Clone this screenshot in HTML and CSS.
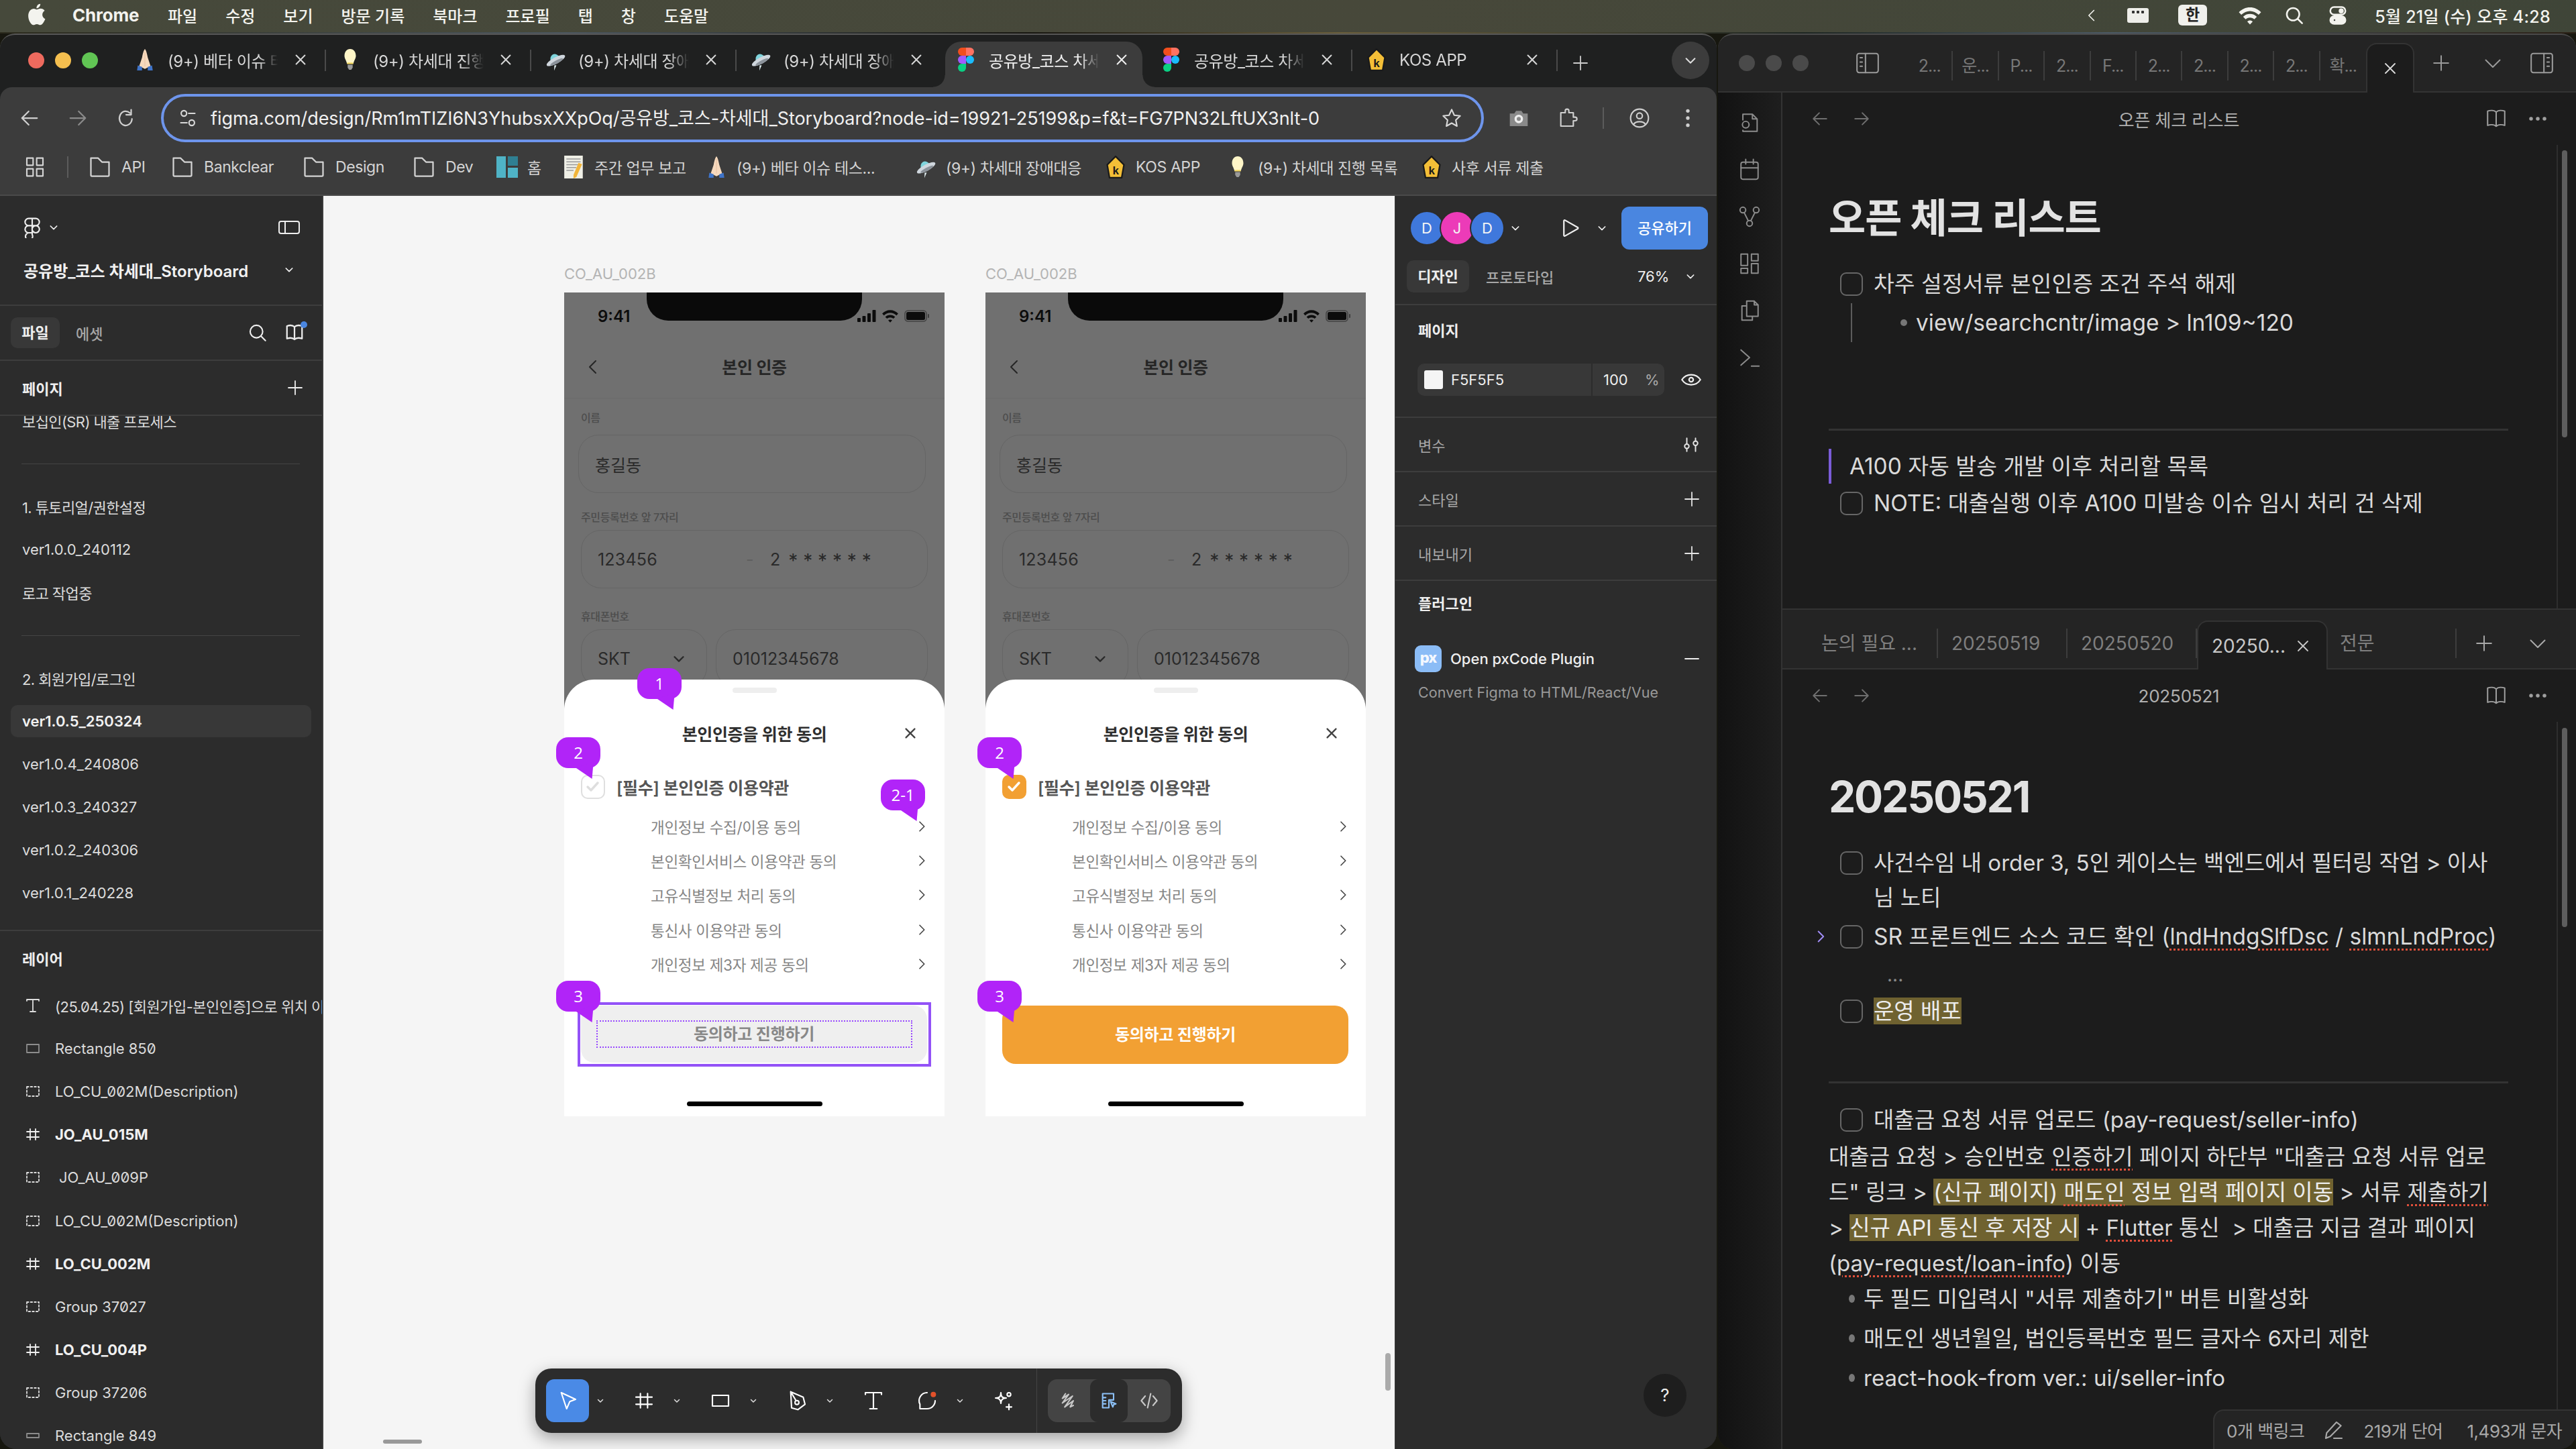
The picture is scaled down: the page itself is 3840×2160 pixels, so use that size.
FILE: index.html
```html
<!DOCTYPE html>
<html lang="ko">
<head>
<meta charset="utf-8">
<title>Figma - Storyboard</title>
<link rel="stylesheet" href="styles.css">
</head>
<body>
<svg class="defs" aria-hidden="true">
  <symbol id="x" viewBox="0 0 24 24"><path d="M5 5L19 19M19 5L5 19"/></symbol>
  <symbol id="back" viewBox="0 0 24 24"><path d="M21 12H3M11 4l-8 8 8 8"/></symbol>
  <symbol id="fwd" viewBox="0 0 24 24"><path d="M3 12h18M13 4l8 8-8 8"/></symbol>
  <symbol id="reload" viewBox="0 0 24 24"><path d="M19 13a7.5 8.5 0 1 1-2.500-7M18 2v6h-6"/></symbol>
  <symbol id="tune" viewBox="0 0 24 24"><circle cx="7" cy="6" r="3.500"/><path d="M13 6h8M3 18h8"/><circle cx="17" cy="18" r="3.500"/></symbol>
  <symbol id="star" viewBox="0 0 24 24"><path d="M12 2.500l2.900 6.300 6.600.8-4.900 4.600 1.300 6.800L12 17.600l-5.900 3.400 1.300-6.800-4.900-4.600 6.600-.8z"/></symbol>
  <symbol id="cam" viewBox="0 0 24 24"><path fill="#8a8a8a" stroke="none" d="M2 7h5l2-3h6l2 3h5v14H2z"/><circle cx="12" cy="13" r="3.500" stroke="#eee" stroke-width="2.500"/></symbol>
  <symbol id="puzzle" viewBox="0 0 24 24"><path d="M5 6h5V4a2 2 0 0 1 4 0v2h5v5h2a2 2 0 0 1 0 4h-2v6H5z"/></symbol>
  <symbol id="profile" viewBox="0 0 24 24"><circle cx="12" cy="12" r="10"/><circle cx="12" cy="9.500" r="3.200"/><path d="M5.500 19c2-4 11-4 13 0"/></symbol>
  <symbol id="kebab" viewBox="0 0 24 24"><g fill="currentColor" stroke="none"><circle cx="12" cy="4" r="2"/><circle cx="12" cy="12" r="2"/><circle cx="12" cy="20" r="2"/></g></symbol>
  <symbol id="dots" viewBox="0 0 24 24"><g fill="currentColor" stroke="none"><circle cx="4" cy="12" r="2.200"/><circle cx="12" cy="12" r="2.200"/><circle cx="20" cy="12" r="2.200"/></g></symbol>
  <symbol id="apps" viewBox="0 0 24 24"><rect x="3" y="2" width="7" height="8"/><rect x="14" y="2" width="7" height="8"/><rect x="3" y="14" width="7" height="8"/><rect x="14" y="14" width="7" height="8"/></symbol>
  <symbol id="folder" viewBox="0 0 24 24"><path d="M3 3h7l4 4h7v13a1 1 0 0 1-1 1H4a1 1 0 0 1-1-1z"/></symbol>
  <symbol id="chevd" viewBox="0 0 24 24"><path d="M5 9l7 7 7-7"/></symbol>
  <symbol id="chevl" viewBox="0 0 24 24"><path d="M16 3l-9 9 9 9"/></symbol>
  <symbol id="chevr" viewBox="0 0 24 24"><path d="M8 3l9 9-9 9"/></symbol>
  <symbol id="plus" viewBox="0 0 24 24"><path d="M12 2v20M2 12h20"/></symbol>
  <symbol id="minus" viewBox="0 0 24 24"><path d="M2 12h20"/></symbol>
  <symbol id="search" viewBox="0 0 24 24"><circle cx="10.500" cy="10.500" r="8"/><path d="M16.500 16.500L22 22"/></symbol>
  <symbol id="book" viewBox="0 0 24 24"><path d="M12 5C10 3 6 3 3 4v15c3-1 7-1 9 1 2-2 6-2 9-1V4c-3-1-7-1-9 1zM12 5v15"/></symbol>
  <symbol id="panel" viewBox="0 0 32 20"><rect x="1" y="1" width="30" height="18" rx="3"/><path d="M10 1v18"/></symbol>
  <symbol id="figmaline" viewBox="0 0 24 24"><path d="M12 2H8a4 4 0 0 0 0 8h4zM12 2h4a4 4 0 0 1 0 8h-4zM12 10H8a4 4 0 0 0 0 8h4zM16 10a4 4 0 1 1-.001 0zM8 18h4v2a4 4 0 1 1-4-2z"/></symbol>
  <symbol id="tt" viewBox="0 0 24 24"><path d="M3 5V3h18v2M12 3v18M8 21h8"/></symbol>
  <symbol id="rect" viewBox="0 0 24 24"><rect x="3" y="6" width="18" height="12"/></symbol>
  <symbol id="rectthin" viewBox="0 0 24 24"><rect x="3" y="9" width="18" height="6"/></symbol>
  <symbol id="dash" viewBox="0 0 24 24"><rect x="3" y="5" width="18" height="14" stroke-dasharray="2.600 3"/></symbol>
  <symbol id="frame" viewBox="0 0 24 24"><path d="M8 4v16M16 4v16M3 8h18M3 16h18"/></symbol>
  <symbol id="eye" viewBox="0 0 24 24"><path d="M1 12c5-8 17-8 22 0-5 8-17 8-22 0z"/><circle cx="12" cy="12" r="2.500"/></symbol>
  <symbol id="vars" viewBox="0 0 24 24"><circle cx="6" cy="14" r="3"/><circle cx="18" cy="10" r="3"/><path d="M6 3v8M6 17v4M18 3v4M18 13v8"/></symbol>
  <symbol id="play" viewBox="0 0 24 24"><path d="M5 3.500v17a1 1 0 0 0 1.500.8l15-8.500a1 1 0 0 0 0-1.600L6.500 2.700A1 1 0 0 0 5 3.500z"/></symbol>
  <symbol id="cursor" viewBox="0 0 24 24"><path d="M5 3l16 7.500-6.500 2.500L11 21z"/></symbol>
  <symbol id="pen" viewBox="0 0 24 24"><path d="M5 2l14 6 2 8-8 6-7-2zM5 2l6 10"/><circle cx="12" cy="14" r="2.200"/></symbol>
  <symbol id="comment" viewBox="0 0 24 24"><path d="M12 3a9 9 0 0 0-8 13v5h8a9 9 0 0 0 9-9"/><circle cx="19" cy="5" r="3" fill="#e2512a" stroke="none"/></symbol>
  <symbol id="actions" viewBox="0 0 24 24"><path d="M9 3c0 4-1 6-6 6 5 0 6 3 6 6 0-3 1-6 6-6-5 0-6-2-6-6z"/><circle cx="18" cy="5" r="2"/><path d="M18 16v6M15 19h6"/></symbol>
  <symbol id="scribble" viewBox="0 0 24 24"><path d="M8 3L4 9l8-5-8 11 13-9L7 20l11-8-4 8 4-2"/></symbol>
  <symbol id="devmode" viewBox="0 0 24 24"><path d="M4 3h14v8h-6v10H4zM4 8h4M4 12h4M4 16h4"/><path d="M14 13l7 3-3 1-1 3z"/></symbol>
  <symbol id="code" viewBox="0 0 24 24"><path d="M7 6l-5 6 5 6M17 6l5 6-5 6M14 3l-4 18"/></symbol>
  <symbol id="pencil" viewBox="0 0 24 24"><path d="M15 3l5 4L8 19l-5 2 1-6zM12 21h9"/></symbol>
  <symbol id="sidel" viewBox="0 0 24 24"><rect x="2" y="3" width="20" height="18" rx="2"/><path d="M10 3v18M5 7h2M5 11h2M5 15h2"/></symbol>
  <symbol id="sider" viewBox="0 0 24 24"><rect x="2" y="3" width="20" height="18" rx="2"/><path d="M14 3v18M17 7h2M17 11h2M17 15h2"/></symbol>
  <symbol id="fsearch" viewBox="0 0 24 24"><path d="M5 9V3h10l5 5v13H5v-1M15 3v5h5"/><circle cx="8" cy="14" r="3.500"/></symbol>
  <symbol id="cal" viewBox="0 0 24 24"><rect x="3" y="4" width="18" height="18" rx="2"/><path d="M3 10h18M8 1v5M16 1v5"/></symbol>
  <symbol id="graph" viewBox="0 0 24 24"><circle cx="5" cy="5" r="3"/><circle cx="19" cy="5" r="3"/><circle cx="12" cy="19" r="3"/><path d="M6.500 8l4 8M17.500 8l-4 8"/></symbol>
  <symbol id="canvasic" viewBox="0 0 24 24"><rect x="3" y="2" width="7" height="12"/><rect x="14" y="2" width="7" height="7"/><rect x="3" y="17" width="7" height="5"/><rect x="14" y="12" width="7" height="10"/></symbol>
  <symbol id="copyic" viewBox="0 0 24 24"><path d="M9 2h8l4 4v12H9zM17 2v4h4M9 7H4v15h11v-4"/></symbol>
  <symbol id="term" viewBox="0 0 24 24"><path d="M3 4l9 8-9 8M14 21h8"/></symbol>
  <symbol id="apple" viewBox="0 0 24 28"><path fill="currentColor" stroke="none" d="M17 0c.3 2.500-2 6-5 6-.4-3 2-6 5-6zM12 7.500c1.500 0 3-1.200 5.500-1.200 2 0 4 1 5.200 2.900-4.500 2.800-3.700 9 .8 10.800-1.300 3.400-4 8-6.500 8-1.700 0-2.500-1.200-4.600-1.200s-3 1.200-4.600 1.200C4.500 28 1 21.500 1 16c0-6 3.800-9.500 7.300-9.500 1.500 0 2.800 1 3.700 1z"/></symbol>
  <symbol id="wifi" viewBox="0 0 24 24"><g fill="currentColor" stroke="none"><path d="M12 4c4.500 0 8 1.800 11 4.800l-2.400 2.500C18 9 15.300 7.600 12 7.600S6 9 3.400 11.300L1 8.800C4 5.800 7.500 4 12 4z"/><path d="M12 10.500c2.800 0 5 1 6.800 2.800l-2.500 2.500c-1.100-1-2.500-1.700-4.300-1.700s-3.200.7-4.300 1.700l-2.500-2.500c1.800-1.800 4-2.800 6.800-2.800z"/><path d="M12 17c1.100 0 2 .4 2.700 1.100L12 21l-2.700-2.900c.7-.7 1.600-1.100 2.700-1.100z"/></g></symbol>
  <symbol id="cc" viewBox="0 0 24 24"><rect x="3" y="2" width="18" height="9" rx="4.500"/><rect x="3" y="13" width="18" height="9" rx="4.500" fill="currentColor"/><circle cx="16" cy="6.500" r="2" fill="currentColor"/><circle cx="8" cy="17.500" r="2" fill="#444"/></symbol>
  <symbol id="signal" viewBox="0 0 28 18"><g fill="currentColor" stroke="none"><rect x="0" y="12" width="5" height="6" rx="1"/><rect x="7.500" y="9" width="5" height="9" rx="1"/><rect x="15" y="5" width="5" height="13" rx="1"/><rect x="22.500" y="0" width="5" height="18" rx="1"/></g></symbol>
  <symbol id="batt" viewBox="0 0 38 18"><rect x="1" y="1" width="32" height="16" rx="4.500" fill="none" stroke="currentColor" stroke-opacity=".45" stroke-width="1.500"/><rect x="3" y="3" width="28" height="12" rx="2.500" fill="currentColor" stroke="none"/><rect x="35" y="6" width="2" height="6" rx="1" fill="currentColor" fill-opacity=".5" stroke="none"/></symbol>
  <symbol id="pray" viewBox="0 0 24 32"><g stroke="none"><path fill="#f6d9bd" d="M12 1c-2 2-3 7-4 12l-4 12 8 4 8-4-4-12c-1-5-2-10-4-12z"/><path fill="#e8c3a3" d="M11.500 5h1v20h-1z"/><path fill="#3f74c9" d="M2 24l6 2v5H1zM22 24l-6 2v5h7z"/></g></symbol>
  <symbol id="bulb" viewBox="0 0 24 32"><g stroke="none"><path fill="#fff6c8" d="M12 1c5 0 8 4.500 8 9.500 0 4-3 7-3.500 11h-9C7 17.500 4 14.500 4 10.500 4 5.500 7 1 12 1z"/><path fill="#f4d860" d="M8 20h8l.5 2h-9z"/><path fill="#9a9a9a" d="M8.500 23h7v4l-2 3h-3l-2-3z"/></g></symbol>
  <symbol id="ufo" viewBox="0 0 24 24"><g stroke="none" transform="rotate(-28 12 12)"><path fill="#7fd4dc" d="M6.500 12a5.500 6.500 0 0 1 11 0z"/><ellipse cx="12" cy="13" rx="11.500" ry="3.600" fill="#cfd6dd"/><ellipse cx="12" cy="14.800" rx="8" ry="1.800" fill="#8b929a"/><path fill="#e6f4f6" d="M8 17l-3 5 5-4z"/></g></symbol>
  <symbol id="figmac" viewBox="0 0 24 36"><g stroke="none"><path fill="#f24e1e" d="M12 0H6a6 6 0 0 0 0 12h6z"/><path fill="#ff7262" d="M12 0h6a6 6 0 0 1 0 12h-6z"/><path fill="#a259ff" d="M12 12H6a6 6 0 0 0 0 12h6z"/><circle cx="18" cy="18" r="6" fill="#1abcfe"/><path fill="#0acf83" d="M6 24h6v6a6 6 0 1 1-6-6z"/></g></symbol>
  <symbol id="kos" viewBox="0 0 28 30"><path fill="#f4bf37" stroke="#1a1a1a" stroke-width="2" d="M14 1l11 11-3 17H6L3 12z"/><text x="14" y="25" font-size="15" font-family="Liberation Sans" font-weight="700" text-anchor="middle" fill="#1a1a1a" stroke="none">k</text></symbol>
  <symbol id="tiles" viewBox="0 0 32 32"><g stroke="none"><rect width="14" height="32" fill="#4fb3c6"/><rect x="17" width="15" height="14" fill="#2f7f92"/><rect x="17" y="17" width="15" height="15" fill="#4fb3c6"/></g></symbol>
  <symbol id="memo" viewBox="0 0 28 32"><g stroke="none"><rect width="26" height="32" fill="#efefe6"/><path fill="#9a9a9a" d="M3 4h20v1.500H3zM3 8h20v1.500H3zM3 12h20v1.500H3zM3 16h14v1.500H3zM3 20h10v1.500H3z"/><path fill="#f2b53a" d="M20 10l5 2-8 18-4 2 0-5z"/></g></symbol>
</svg>

<header class="menubar">
  <svg class="ic s-apple"><use href="#apple"/></svg>
  <b class="m-app">Chrome</b>
  <span class="m-item">파일</span><span class="m-item">수정</span><span class="m-item">보기</span><span class="m-item">방문 기록</span><span class="m-item">북마크</span><span class="m-item">프로필</span><span class="m-item">탭</span><span class="m-item">창</span><span class="m-item">도움말</span>
  <div class="m-right">
    <svg class="ic s-mchev"><use href="#chevl"/></svg>
    <span class="m-box"></span>
    <span class="m-han">한</span>
    <svg class="ic s-mwifi"><use href="#wifi"/></svg>
    <svg class="ic s-msearch"><use href="#search"/></svg>
    <svg class="ic s-mcc"><use href="#cc"/></svg>
    <span class="m-date">5월 21일 (수) 오후 4:28</span>
  </div>
</header>
<div class="strip"></div>

<main class="desktop">
  <section class="chrome">
    <div class="tabstrip">
      <div class="lights"><i class="d-r"></i><i class="d-y"></i><i class="d-g"></i></div>
      <div class="tab"><svg class="fav"><use href="#pray"/></svg><span class="tab-t">(9+) 베타 이슈 테스트</span><svg class="ic tab-x"><use href="#x"/></svg></div><i class="tsep"></i>
      <div class="tab"><svg class="fav"><use href="#bulb"/></svg><span class="tab-t">(9+) 차세대 진행 목록</span><svg class="ic tab-x"><use href="#x"/></svg></div><i class="tsep"></i>
      <div class="tab"><svg class="fav"><use href="#ufo"/></svg><span class="tab-t">(9+) 차세대 장애대응</span><svg class="ic tab-x"><use href="#x"/></svg></div><i class="tsep"></i>
      <div class="tab"><svg class="fav"><use href="#ufo"/></svg><span class="tab-t">(9+) 차세대 장애대응</span><svg class="ic tab-x"><use href="#x"/></svg></div><i class="tsep tsep-off"></i>
      <div class="tab tab-on"><svg class="fav fav-f"><use href="#figmac"/></svg><span class="tab-t">공유방_코스 차세대_S</span><svg class="ic tab-x"><use href="#x"/></svg></div><i class="tsep tsep-off"></i>
      <div class="tab"><svg class="fav fav-f"><use href="#figmac"/></svg><span class="tab-t">공유방_코스 차세대_S</span><svg class="ic tab-x"><use href="#x"/></svg></div><i class="tsep"></i>
      <div class="tab"><svg class="fav"><use href="#kos"/></svg><span class="tab-t">KOS APP</span><svg class="ic tab-x"><use href="#x"/></svg></div><i class="tsep"></i>
      <svg class="ic tab-plus"><use href="#plus"/></svg>
      <div class="tab-menu"><svg class="ic s-16"><use href="#chevd"/></svg></div>
    </div>
    <div class="toolbar">
      <div class="navrow">
        <span class="slot"><svg class="ic s-30"><use href="#back"/></svg></span>
        <span class="slot slot-dim"><svg class="ic s-30"><use href="#fwd"/></svg></span>
        <span class="slot"><svg class="ic s-30"><use href="#reload"/></svg></span>
        <div class="addr">
          <svg class="ic s-28"><use href="#tune"/></svg>
          <span class="url">figma.com/design/Rm1mTIZI6N3YhubsxXXpOq/공유방_코스-차세대_Storyboard?node-id=19921-25199&amp;p=f&amp;t=FG7PN32LftUX3nlt-0</span>
          <svg class="ic s-32"><use href="#star"/></svg>
        </div>
        <span class="slot slot-l"><svg class="ic s-32"><use href="#cam"/></svg></span>
        <span class="slot"><svg class="ic s-32"><use href="#puzzle"/></svg></span>
        <i class="bsep"></i>
        <span class="slot"><svg class="ic s-32"><use href="#profile"/></svg></span>
        <span class="slot"><svg class="ic s-32"><use href="#kebab"/></svg></span>
      </div>
      <div class="bookmarks">
        <svg class="ic s-32"><use href="#apps"/></svg>
        <i class="bm-sep"></i>
        <span class="bm"><svg class="ic s-36"><use href="#folder"/></svg>API</span>
        <span class="bm"><svg class="ic s-36"><use href="#folder"/></svg>Bankclear</span>
        <span class="bm"><svg class="ic s-36"><use href="#folder"/></svg>Design</span>
        <span class="bm"><svg class="ic s-36"><use href="#folder"/></svg>Dev</span>
        <span class="bm"><svg class="fav"><use href="#tiles"/></svg>홈</span>
        <span class="bm"><svg class="fav"><use href="#memo"/></svg>주간 업무 보고</span>
        <span class="bm"><svg class="fav"><use href="#pray"/></svg>(9+) 베타 이슈 테스...</span>
        <span class="bm"><svg class="fav"><use href="#ufo"/></svg>(9+) 차세대 장애대응</span>
        <span class="bm"><svg class="fav"><use href="#kos"/></svg>KOS APP</span>
        <span class="bm"><svg class="fav"><use href="#bulb"/></svg>(9+) 차세대 진행 목록</span>
        <span class="bm"><svg class="fav"><use href="#kos"/></svg>사후 서류 제출</span>
      </div>
    </div>

    <div class="figma">
      <aside class="fl">
        <div class="fl-head">
          <div class="fl-logo"><svg class="ic s-32"><use href="#figmaline"/></svg><svg class="ic s-14"><use href="#chevd"/></svg><svg class="ic s-panel"><use href="#panel"/></svg></div>
          <div class="fl-title"><span>공유방_코스 차세대_Storyboard</span><svg class="ic s-14"><use href="#chevd"/></svg></div>
        </div>
        <div class="fl-tabs">
          <span class="pill">파일</span><span class="pill-off">에셋</span>
          <svg class="ic s-28 push"><use href="#search"/></svg>
          <span class="bookdot"><svg class="ic s-30"><use href="#book"/></svg><i></i></span>
        </div>
        <div class="fl-sec"><b>페이지</b><svg class="ic s-24"><use href="#plus"/></svg></div>
        <div class="fl-list">
          <div class="pg pg-first pg-k">보십인(SR) 내출 프로세스</div>
          <div class="pg"><i class="pg-line"></i></div>
          <div class="pg pg-k">1. 튜토리얼/권한설정</div>
          <div class="pg">ver1.0.0_240112</div>
          <div class="pg pg-k">로고 작업중</div>
          <div class="pg"><i class="pg-line"></i></div>
          <div class="pg pg-k">2. 회원가입/로그인</div>
          <div class="pg pg-on"><span>ver1.0.5_250324</span></div>
          <div class="pg">ver1.0.4_240806</div>
          <div class="pg">ver1.0.3_240327</div>
          <div class="pg">ver1.0.2_240306</div>
          <div class="pg">ver1.0.1_240228</div>
          <div class="pg pg-k">회원가입 이전 버전</div>
        </div>
        <div class="fl-layers">
          <div class="fl-sec2"><b>레이어</b></div>
          <div class="ly"><svg class="ic s-24"><use href="#tt"/></svg><span class="ly-k">(25.04.25) [회원가입-본인인증]으로 위치 이동</span></div>
          <div class="ly"><svg class="ic s-24 dim"><use href="#rect"/></svg><span>Rectangle 850</span></div>
          <div class="ly"><svg class="ic s-24"><use href="#dash"/></svg><span>LO_CU_002M(Description)</span></div>
          <div class="ly ly-b"><svg class="ic s-24"><use href="#frame"/></svg><span>JO_AU_015M</span></div>
          <div class="ly"><svg class="ic s-24"><use href="#dash"/></svg><span class="ly-in">JO_AU_009P</span></div>
          <div class="ly"><svg class="ic s-24"><use href="#dash"/></svg><span>LO_CU_002M(Description)</span></div>
          <div class="ly ly-b"><svg class="ic s-24"><use href="#frame"/></svg><span>LO_CU_002M</span></div>
          <div class="ly"><svg class="ic s-24"><use href="#dash"/></svg><span>Group 37027</span></div>
          <div class="ly ly-b"><svg class="ic s-24"><use href="#frame"/></svg><span>LO_CU_004P</span></div>
          <div class="ly"><svg class="ic s-24"><use href="#dash"/></svg><span>Group 37206</span></div>
          <div class="ly"><svg class="ic s-24 dim"><use href="#rectthin"/></svg><span>Rectangle 849</span></div>
        </div>
      </aside>

      <div class="canvas">
        <div class="flabel flabel-a">CO_AU_002B</div>
        <div class="flabel flabel-b">CO_AU_002B</div>

        <article class="phone phone-a">
          <div class="ph-top">
            <div class="notch"></div>
            <div class="ph-status"><b>9:41</b><span class="ph-sys"><svg class="s-signal"><use href="#signal"/></svg><svg class="s-wifi"><use href="#wifi"/></svg><svg class="s-batt"><use href="#batt"/></svg></span></div>
            <div class="ph-nav"><svg class="ic s-24 ph-back"><use href="#chevl"/></svg><b>본인 인증</b></div>
            <div class="ph-body">
              <div class="lbl lbl-1">이름</div>
              <div class="inp inp-1">홍길동</div>
              <div class="lbl lbl-2">주민등록번호 앞 7자리</div>
              <div class="inp inp-2"><span class="rn">123456</span><span class="rn-d">-</span><span>2</span><span class="rn-s">* * * * * *</span></div>
              <div class="lbl lbl-3">휴대폰번호</div>
              <div class="inp-row"><div class="inp inp-s">SKT<svg class="ic s-22"><use href="#chevd"/></svg></div><div class="inp inp-p">01012345678</div></div>
            </div>
          </div>
          <div class="sheet">
            <div class="grab"></div>
            <div class="sh-title"><span></span><b>본인인증을 위한 동의</b><svg class="ic s-22 sh-x"><use href="#x"/></svg></div>
            <div class="sh-check"><span class="cbx"><svg class="ic s-26"><path d="M5 13l5 5L20 7"/></svg></span><b>[필수] 본인인증 이용약관</b></div>
            <div class="sh-li"><span>개인정보 수집/이용 동의</span><svg class="ic s-18"><use href="#chevr"/></svg></div>
            <div class="sh-li"><span>본인확인서비스 이용약관 동의</span><svg class="ic s-18"><use href="#chevr"/></svg></div>
            <div class="sh-li"><span>고유식별정보 처리 동의</span><svg class="ic s-18"><use href="#chevr"/></svg></div>
            <div class="sh-li"><span>통신사 이용약관 동의</span><svg class="ic s-18"><use href="#chevr"/></svg></div>
            <div class="sh-li"><span>개인정보 제3자 제공 동의</span><svg class="ic s-18"><use href="#chevr"/></svg></div>
            <div class="sh-btn"><i class="sel-outer"></i><i class="sel-dots"></i><b>동의하고 진행하기</b></div>
            <div class="homebar"></div>
          </div>
          <div class="badge b-1">1</div>
          <div class="badge b-2">2</div>
          <div class="badge b-21">2-1</div>
          <div class="badge b-3">3</div>
        </article>

        <article class="phone phone-b">
          <div class="ph-top">
            <div class="notch"></div>
            <div class="ph-status"><b>9:41</b><span class="ph-sys"><svg class="s-signal"><use href="#signal"/></svg><svg class="s-wifi"><use href="#wifi"/></svg><svg class="s-batt"><use href="#batt"/></svg></span></div>
            <div class="ph-nav"><svg class="ic s-24 ph-back"><use href="#chevl"/></svg><b>본인 인증</b></div>
            <div class="ph-body">
              <div class="lbl lbl-1">이름</div>
              <div class="inp inp-1">홍길동</div>
              <div class="lbl lbl-2">주민등록번호 앞 7자리</div>
              <div class="inp inp-2"><span class="rn">123456</span><span class="rn-d">-</span><span>2</span><span class="rn-s">* * * * * *</span></div>
              <div class="lbl lbl-3">휴대폰번호</div>
              <div class="inp-row"><div class="inp inp-s">SKT<svg class="ic s-22"><use href="#chevd"/></svg></div><div class="inp inp-p">01012345678</div></div>
            </div>
          </div>
          <div class="sheet">
            <div class="grab"></div>
            <div class="sh-title"><span></span><b>본인인증을 위한 동의</b><svg class="ic s-22 sh-x"><use href="#x"/></svg></div>
            <div class="sh-check"><span class="cbx cbx-on"><svg class="ic s-26"><path d="M5 13l5 5L20 7"/></svg></span><b>[필수] 본인인증 이용약관</b></div>
            <div class="sh-li"><span>개인정보 수집/이용 동의</span><svg class="ic s-18"><use href="#chevr"/></svg></div>
            <div class="sh-li"><span>본인확인서비스 이용약관 동의</span><svg class="ic s-18"><use href="#chevr"/></svg></div>
            <div class="sh-li"><span>고유식별정보 처리 동의</span><svg class="ic s-18"><use href="#chevr"/></svg></div>
            <div class="sh-li"><span>통신사 이용약관 동의</span><svg class="ic s-18"><use href="#chevr"/></svg></div>
            <div class="sh-li"><span>개인정보 제3자 제공 동의</span><svg class="ic s-18"><use href="#chevr"/></svg></div>
            <div class="sh-btn sh-btn-on"><b>동의하고 진행하기</b></div>
            <div class="homebar"></div>
          </div>
          <div class="badge b-2">2</div>
          <div class="badge b-3">3</div>
        </article>

        <i class="cv-vbar"></i>
        <i class="cv-hbar"></i>

        <div class="tools">
          <span class="tool tool-on"><svg class="ic s-32"><use href="#cursor"/></svg></span><span class="tchev"><svg class="ic s-12"><use href="#chevd"/></svg></span>
          <span class="tool tm"><svg class="ic s-32"><use href="#frame"/></svg></span><span class="tchev"><svg class="ic s-12"><use href="#chevd"/></svg></span>
          <span class="tool tm"><svg class="ic s-32"><use href="#rect"/></svg></span><span class="tchev"><svg class="ic s-12"><use href="#chevd"/></svg></span>
          <span class="tool tm"><svg class="ic s-32"><use href="#pen"/></svg></span><span class="tchev"><svg class="ic s-12"><use href="#chevd"/></svg></span>
          <span class="tool tm"><svg class="ic s-32"><use href="#tt"/></svg></span>
          <span class="tool tm"><svg class="ic s-32"><use href="#comment"/></svg></span><span class="tchev"><svg class="ic s-12"><use href="#chevd"/></svg></span>
          <span class="tool tm"><svg class="ic s-32"><use href="#actions"/></svg></span>
          <i class="tdiv"></i>
          <div class="tgroup">
            <span class="tg"><svg class="ic s-28"><use href="#scribble"/></svg></span>
            <span class="tg tg-on"><svg class="ic s-28"><use href="#devmode"/></svg></span>
            <span class="tg"><svg class="ic s-28"><use href="#code"/></svg></span>
          </div>
        </div>
      </div>

      <aside class="fr">
        <div class="fr-head">
          <div class="fr-top">
            <span class="av av-b">D</span><span class="av av-p">J</span><span class="av av-b">D</span>
            <svg class="ic s-14 fr-c1"><use href="#chevd"/></svg>
            <svg class="ic s-30 fr-play"><use href="#play"/></svg>
            <svg class="ic s-14 fr-c2"><use href="#chevd"/></svg>
            <span class="share">공유하기</span>
          </div>
          <div class="fr-tabs">
            <span class="pill pill-d">디자인</span><span class="pill-off pill-p">프로토타입</span>
            <span class="zoomv">76%</span><svg class="ic s-14"><use href="#chevd"/></svg>
          </div>
        </div>
        <div class="fr-page">
          <b>페이지</b>
          <div class="colorrow">
            <div class="colorf"><i class="sw"></i><span class="hex">F5F5F5</span><i class="cdiv"></i><span class="pct">100</span><span class="pc">%</span></div>
            <svg class="ic s-30"><use href="#eye"/></svg>
          </div>
        </div>
        <div class="fr-row"><span>변수</span><svg class="ic s-26"><use href="#vars"/></svg></div>
        <div class="fr-row"><span>스타일</span><svg class="ic s-24"><use href="#plus"/></svg></div>
        <div class="fr-row"><span>내보내기</span><svg class="ic s-24"><use href="#plus"/></svg></div>
        <div class="fr-plug">
          <b>플러그인</b>
          <div class="plug-row"><span class="pxi">px</span><span class="pxn">Open pxCode Plugin</span><svg class="ic s-24"><use href="#minus"/></svg></div>
          <div class="plug-d">Convert Figma to HTML/React/Vue</div>
        </div>
        <span class="help">?</span>
      </aside>
    </div>
  </section>

  <section class="obs">
    <div class="ob-bar">
      <div class="lights lights-g"><i></i><i></i><i></i></div>
      <svg class="ic s-38 ob-tl"><use href="#sidel"/></svg>
      <div class="ob-cells"><span>2...</span><span>운...</span><span>P...</span><span>2...</span><span>F...</span><span>2...</span><span>2...</span><span>2...</span><span>2...</span><span>확...</span></div>
      <div class="ob-act"><svg class="ic s-24"><use href="#x"/></svg></div>
      <svg class="ic s-26 ob-plus"><use href="#plus"/></svg>
      <svg class="ic s-20 ob-ch"><use href="#chevd"/></svg>
      <svg class="ic s-38 ob-tr"><use href="#sider"/></svg>
    </div>
    <div class="ob-main">
      <nav class="rail">
        <span><svg class="ic s-34"><use href="#fsearch"/></svg></span>
        <span><svg class="ic s-34"><use href="#cal"/></svg></span>
        <span><svg class="ic s-34"><use href="#graph"/></svg></span>
        <span><svg class="ic s-34"><use href="#canvasic"/></svg></span>
        <span><svg class="ic s-34"><use href="#copyic"/></svg></span>
        <span><svg class="ic s-34"><use href="#term"/></svg></span>
      </nav>
      <div class="ob-col">
        <section class="pane pane-top">
          <div class="pnav"><svg class="ic s-26 pn-a"><use href="#back"/></svg><svg class="ic s-26 pn-a"><use href="#fwd"/></svg><span class="pn-t">오픈 체크 리스트</span><svg class="ic s-34"><use href="#book"/></svg><svg class="ic s-30 pn-d"><use href="#dots"/></svg></div>
          <div class="pbody">
            <div class="doc doc-top">
              <h1 class="h-a">오픈 체크 리스트</h1>
              <div class="todo mt-30"><i class="cb"></i><span>차주 설정서류 본인인증 조건 주석 해제</span></div>
              <div class="nest"><i class="bl"></i><span>view/searchcntr/image &gt; ln109~120</span></div>
              <div class="rule rule-a"></div>
              <blockquote class="quote">A100 자동 발송 개발 이후 처리할 목록</blockquote>
              <div class="todo"><i class="cb"></i><span>NOTE: 대출실행 이후 A100 미발송 이슈 임시 처리 건 삭제</span></div>
            </div>
            <div class="sb"><i class="th th-a"></i></div>
          </div>
        </section>
        <div class="ptabs">
          <span class="pt pt-first">논의 필요 ...</span>
          <span class="pt pt-sep">20250519</span>
          <span class="pt">20250520</span>
          <span class="pt-on"><span>20250...</span><svg class="ic s-24"><use href="#x"/></svg></span>
          <span class="pt-last">전문</span>
          <i class="pt-div"></i>
          <svg class="ic s-26 pt-plus"><use href="#plus"/></svg>
          <svg class="ic s-20 pt-ch"><use href="#chevd"/></svg>
        </div>
        <section class="pane pane-bot">
          <div class="pnav"><svg class="ic s-26 pn-a"><use href="#back"/></svg><svg class="ic s-26 pn-a"><use href="#fwd"/></svg><span class="pn-t">20250521</span><svg class="ic s-34"><use href="#book"/></svg><svg class="ic s-30 pn-d"><use href="#dots"/></svg></div>
          <div class="pbody">
            <div class="doc doc-bot">
              <h1 class="h-b">20250521</h1>
              <div class="todo mt-30"><i class="cb"></i><span>사건수임 내 order 3, 5인 케이스는 백엔드에서 필터링 작업 &gt; 이사<br>님 노티</span></div>
              <div class="todo has-fold"><svg class="ic s-20 fold"><use href="#chevr"/></svg><i class="cb"></i><span>SR 프론트엔드 소스 코드 확인 (<u class="sp">lndHndgSlfDsc</u> / <u class="sp">slmnLndProc</u>)</span></div>
              <div class="more">...</div>
              <div class="todo"><i class="cb"></i><span><mark>운영 배포</mark></span></div>
              <div class="rule rule-b"></div>
              <div class="todo mt-28"><i class="cb"></i><span>대출금 요청 서류 업로드 (pay-request/seller-info)</span></div>
              <p class="para">대출금 요청 &gt; 승인번호 <u class="sp">인증하기</u> 페이지 하단부 "대출금 요청 서류 업로<br>드" 링크 &gt; <mark>(신규 페이지) <u class="sp">매도인</u> 정보 입력 페이지 이동</mark> &gt; 서류 <u class="sp">제출하기</u><br>&gt; <mark>신규 API 통신 후 저장 시</mark> + <u class="sp">Flutter</u> 통신 &nbsp;&gt; 대출금 지급 결과 페이지<br>(<u class="sp">pay-request/loan-info</u>) 이동</p>
              <ul class="ul">
                <li><i class="bl2"></i>두 필드 미입력시 "서류 제출하기" 버튼 비활성화</li>
                <li><i class="bl2"></i>매도인 생년월일, 법인등록번호 필드 글자수 6자리 제한</li>
                <li><i class="bl2"></i>react-hook-from ver.: ui/seller-info</li>
              </ul>
            </div>
            <div class="sb sb-b"><i class="th th-b"></i></div>
          </div>
          <div class="statusbar"><span>0개 백링크</span><svg class="ic s-32"><use href="#pencil"/></svg><span>219개 단어</span><span>1,493개 문자</span></div>
        </section>
      </div>
    </div>
  </section>
</main>
</body>
</html>
```

FILE: styles.css
```css
* { box-sizing: border-box; }
html, body { margin: 0; padding: 0; }
body {
  width: 3840px; height: 2160px; overflow: hidden;
  background: #17170f;
  font-family: Inter, "Noto Sans CJK KR", sans-serif;
  color: #ddd;
}
i { display: block; font-style: normal; }
.defs { position: absolute; width: 0; height: 0; }
.ic { display: block; flex: none; fill: none; stroke: currentColor; stroke-width: 1.8; stroke-linecap: round; stroke-linejoin: round; }
.fav { display: block; flex: none; width: 32px; height: 34px; }
.s-12 { width: 12px; height: 12px; stroke-width: 3; }
.s-14 { width: 16px; height: 16px; stroke-width: 2.6; }
.s-16 { width: 22px; height: 22px; stroke-width: 2.2; }
.s-18 { width: 18px; height: 18px; stroke-width: 2.2; }
.s-20 { width: 20px; height: 20px; }
.s-22 { width: 22px; height: 22px; stroke-width: 2.6; }
.s-24 { width: 24px; height: 24px; }
.s-26 { width: 26px; height: 26px; }
.s-28 { width: 28px; height: 28px; }
.s-30 { width: 30px; height: 30px; }
.s-32 { width: 32px; height: 32px; stroke-width: 1.6; }
.s-34 { width: 34px; height: 34px; stroke-width: 1.4; }
.s-36 { width: 36px; height: 36px; stroke-width: 1.5; }
.s-38 { width: 38px; height: 38px; stroke-width: 1.3; }
.s-panel { width: 32px; height: 20px; stroke-width: 2; margin-left: auto; margin-right: 33px; }
.dim { opacity: .55; }
.push { margin-left: auto; }

/* menu bar */
.menubar {
  height: 48px; display: flex; align-items: center;
  background: linear-gradient(90deg, #46493b 0%, #47483a 55%, #3f4538 100%);
  padding: 0 0 3px 41px; color: #f3f3ee;
}
.s-apple { width: 27px; height: 33px; margin-right: 40px; margin-top: -2px; }
.m-app { font-size: 26px; font-weight: 700; width: 142px; letter-spacing: -.2px; }
.m-item { font-size: 24px; margin-right: 42px; font-weight: 500; white-space: nowrap; }
.m-right { margin-left: auto; display: flex; align-items: center; padding-right: 38px; }
.s-mchev { width: 20px; height: 24px; stroke-width: 2; margin-right: 43px; }
.m-box { width: 32px; height: 22px; border-radius: 3px; margin-right: 44px;
  background:
    radial-gradient(circle at 9px 6px, #333 2px, transparent 2.5px),
    radial-gradient(circle at 16px 6px, #333 2px, transparent 2.5px),
    radial-gradient(circle at 23px 6px, #333 2px, transparent 2.5px),
    #eeeeea; }
.m-han { width: 43px; height: 31px; background: #f0f0ec; border-radius: 6px; color: #222; font-size: 23px; font-weight: 600; text-align: center; line-height: 31px; margin-right: 46px; }
.s-mwifi { width: 36px; height: 36px; margin-right: 34px; }
.s-msearch { width: 28px; height: 28px; stroke-width: 2.2; margin-right: 36px; }
.s-mcc { width: 30px; height: 34px; stroke-width: 2; margin-right: 40px; }
.m-date { font-size: 25px; font-weight: 500; white-space: nowrap; letter-spacing: .3px; }
.strip { height: 2px; background: linear-gradient(90deg, #2b2a1c, #4c5760 22%, #171610 40%, #6b5f3c 52%, #1e2622 70%, #4c5a66 82%, #2b2015); }

.desktop { display: flex; height: 2110px; justify-content: space-between; }

/* chrome */
.chrome {
  width: 2559px; height: 2110px; background: #1f2020; border-top: 2px solid #565656;
  border-radius: 22px 22px 24px 24px; overflow: hidden; display: flex; flex-direction: column;
}
.tabstrip { height: 78px; padding-top: 10px; display: flex; align-items: flex-start; flex: none; }
.lights { width: 180px; height: 56px; padding-left: 42px; display: flex; align-items: center; gap: 16px; flex: none; }
.lights i { width: 24px; height: 24px; border-radius: 50%; }
.d-r { background: #ee6a5e; } .d-y { background: #f5bf4f; } .d-g { background: #61c554; }
.lights-g { width: auto; padding-left: 31px; height: auto; }
.lights-g i { background: #4a4a4a; }
.tab { width: 304px; height: 68px; padding: 0 0 14px 20px; display: flex; align-items: center; flex: none; color: #d7d7d7; position: relative; }
.tab-t { width: 165px; margin-left: 18px; font-size: 24px; white-space: nowrap; overflow: hidden; flex: none; letter-spacing: -.4px;
  -webkit-mask-image: linear-gradient(90deg, #000 82%, transparent 100%); mask-image: linear-gradient(90deg, #000 82%, transparent 100%); }
.tab-x { width: 22px; height: 22px; margin-left: 22px; stroke-width: 2.2; }
.tsep { width: 2px; height: 32px; margin-top: 12px; background: #4a4a4a; flex: none; }
.tsep-off { background: transparent; }
.tab-on { background: #3c3c3c; border-radius: 24px 24px 0 0; width: 294px; margin: 0 5px 0 5px; padding-left: 15px; color: #f0f0f0; }
.tab-on::before, .tab-on::after { content: ""; position: absolute; bottom: 0; width: 18px; height: 18px; }
.tab-on::before { left: -18px; background: radial-gradient(circle at 0 0, transparent 17px, #3c3c3c 18px); }
.tab-on::after { right: -18px; background: radial-gradient(circle at 100% 0, transparent 17px, #3c3c3c 18px); }
.fav-f { width: 24px; height: 36px; margin: 0 4px; }
.tab-plus { width: 24px; height: 24px; margin: 20px 0 0 22px; color: #ccc; }
.tab-menu { width: 56px; height: 56px; border-radius: 28px; background: #3c3c3c; margin-left: auto; margin-right: 11px; display: flex; align-items: center; justify-content: center; color: #ddd; }

.toolbar { background: #3c3c3c; height: 162px; border-radius: 18px 18px 0 0; flex: none; border-bottom: 2px solid #4a4a4a; }
.navrow { height: 82px; padding: 10px 0 0 8px; display: flex; align-items: flex-start; }
.slot { width: 72px; height: 72px; display: flex; align-items: center; justify-content: center; color: #cfcfcf; flex: none; }
.slot-dim { color: #8a8a8a; }
.slot-l { margin-left: 16px; }
.addr { margin-left: 16px; width: 1972px; height: 72px; border: 4px solid #6e95ec; border-radius: 36px; display: flex; align-items: center; padding: 0 28px 0 22px; color: #d8d8d8; flex: none; }
.url { margin: -3px 0 0 20px; font-size: 27px; white-space: nowrap; letter-spacing: -.05px; color: #f0f0f0; flex: 1; }
.bsep { width: 2px; height: 32px; background: #5c5c5c; margin: 20px 17px 0 17px; flex: none; }
.bookmarks { height: 74px; display: grid; grid-template-columns: 64px 33px 123px 196px 164px 124px 100px 212px 312px 283px 182px 289px auto; align-items: center; padding-left: 36px; color: #d4d4d4; font-size: 23px; }
.bm { display: flex; align-items: center; gap: 14px; white-space: nowrap; letter-spacing: -.4px; }
.bm .s-36 { margin-left: -2px; }
.bm-sep { width: 2px; height: 32px; background: #5c5c5c; }

/* figma shell */
.figma { flex: 1; display: flex; min-height: 0; background: #2c2c2c; }
.fl { width: 482px; flex: none; border-right: 2px solid #3a3a3a; background: #2c2c2c; overflow: hidden; }
.fl-head { height: 164px; border-bottom: 2px solid #3d3d3d; padding: 31px 0 0 32px; color: #eee; }
.fl-logo { height: 32px; display: flex; align-items: center; gap: 8px; }
.fl-title { display: flex; align-items: center; margin-top: 23px; height: 48px; margin-left: 3px; font-size: 24px; font-weight: 600; white-space: nowrap; color: #f1f1f1; }
.fl-title span { width: 388px; }
.fl-tabs { height: 82px; border-bottom: 2px solid #3d3d3d; display: flex; align-items: center; padding: 0 26px 0 16px; color: #eee; }
.pill { width: 73px; height: 46px; line-height: 46px; text-align: center; background: #383838; border-radius: 10px; font-size: 22px; font-weight: 700; color: #eee; flex: none; }
.pill-off { font-size: 22px; margin-left: 24px; color: #a6a6a6; font-weight: 500; }
.bookdot { position: relative; margin-left: 26px; display: block; }
.bookdot i { position: absolute; right: -4px; top: -2px; width: 10px; height: 10px; background: #4a86e0; border-radius: 50%; }
.fl-sec { height: 82px; border-bottom: 2px solid #3d3d3d; display: flex; align-items: center; justify-content: space-between; padding: 0 28px 0 33px; color: #eee; font-size: 22px; }
.fl-sec b, .fl-sec2 b { font-weight: 700; }
.fl-list { height: 768px; overflow: hidden; border-bottom: 2px solid #3d3d3d; }
.pg { height: 64px; display: flex; align-items: center; padding: 0 32px 0 33px; font-size: 22px; color: #dcdcdc; white-space: nowrap; }
.pg-k { letter-spacing: -.6px; }
.pg-first { margin-top: -25px; }
.pg-line { width: 100%; height: 1px; background: #444; margin-left: -1px; }
.pg-on { font-weight: 600; color: #f1f1f1; position: relative; z-index: 0; }
.pg-on::before { content: ""; position: absolute; z-index: -1; left: 16px; right: 16px; top: 8px; bottom: 8px; background: #383838; border-radius: 10px; }
.fl-layers { overflow: hidden; }
.fl-sec2 { height: 79px; display: flex; align-items: center; padding-left: 33px; font-size: 22px; color: #eee; }
.ly { height: 64.1px; display: flex; align-items: center; padding-left: 37px; gap: 21px; font-size: 22px; white-space: nowrap; color: #dcdcdc; font-variant-numeric: slashed-zero; overflow: hidden; }
.ly-in { margin-left: 6px; }
.ly-k { letter-spacing: -.5px; }
.ly-b { font-weight: 700; color: #f0f0f0; font-variant-numeric: normal; }

/* canvas */
.canvas { flex: 1; min-width: 0; background: #f5f5f5; position: relative; overflow: hidden; }
.flabel { position: absolute; top: 103px; font-size: 22px; color: #b4b4b4; letter-spacing: 0; }
.flabel-a { left: 359px; } .flabel-b { left: 987px; }
.phone { position: absolute; top: 144px; width: 567px; height: 1228px; background: #fff; font-family: Inter, "Noto Sans CJK KR", sans-serif; }
.phone-a { left: 359px; } .phone-b { left: 987px; }
.ph-top { height: 620px; background: #707070; overflow: hidden; position: relative; color: #262626; }
.notch { position: absolute; left: 123px; top: 0; width: 321px; height: 42px; background: #0a0a0a; border-radius: 0 0 32px 32px; }
.ph-status { height: 66px; padding: 4px 22px 0 50px; display: flex; justify-content: space-between; align-items: center; color: #0c0c0c; }
.ph-status b { font-size: 24px; font-weight: 600; }
.ph-sys { display: flex; align-items: center; gap: 7px; color: #0c0c0c; }
.s-signal { width: 28px; height: 18px; display: block; }
.s-wifi { width: 28px; height: 26px; display: block; }
.s-batt { width: 38px; height: 18px; display: block; }
.ph-nav { height: 92px; padding-bottom: 3px; border-bottom: 1px solid #6a6a6a; display: flex; align-items: center; justify-content: center; position: relative; }
.ph-nav b { font-size: 25px; font-weight: 600; letter-spacing: -.4px; }
.ph-back { position: absolute; left: 31px; top: 33px; stroke-width: 2; }
.ph-body { padding-left: 25px; width: 567px; }
.lbl { font-size: 16px; height: 20px; line-height: 20px; color: #4d4d4d; font-weight: 500; letter-spacing: -.4px; }
.lbl-1 { margin-top: 19px; } .lbl-2 { margin-top: 26px; } .lbl-3 { margin-top: 32px; }
.inp { height: 87px; border: 1.5px solid #656565; border-radius: 30px; display: flex; align-items: center; font-size: 25px; padding-left: 24px; color: #2a2a2a; flex: none; }
.inp-1 { margin: 15px 0 0 -4px; width: 518px; }
.inp-2 { margin-top: 9px; width: 517px; }
.rn { width: 221px; letter-spacing: .2px; } .rn-d { width: 36px; color: #5f5f5f; }
.rn-s { margin-left: 12px; font-size: 28px; letter-spacing: 0; word-spacing: 0; position: relative; top: 2px; }
.inp-row { display: flex; gap: 13px; margin-top: 9px; }
.inp-s { width: 188px; justify-content: space-between; padding-right: 30px; }
.inp-p { width: 316px; }
.sheet { position: absolute; left: 0; right: 0; top: 577px; height: 651px; background: #fff; border-radius: 45px 45px 0 0; color: #2f2f2f; }
.grab { width: 66px; height: 8px; border-radius: 4px; background: #eee; margin: 12px auto 0; }
.sh-title { margin-top: 35px; height: 50px; display: grid; grid-template-columns: 1fr auto 1fr; align-items: center; font-size: 25px; letter-spacing: -.35px; }
.sh-title b { font-weight: 600; }
.sh-x { justify-self: end; margin-right: 40px; color: #444; }
.sh-check { margin-top: 37px; height: 36px; padding-left: 25px; display: flex; align-items: center; gap: 17px; font-size: 25px; color: #555; letter-spacing: -.3px; }
.sh-check b { font-weight: 600; }
.cbx { width: 36px; height: 36px; border: 2px solid #dfdfdf; border-radius: 10px; display: flex; align-items: center; justify-content: center; color: #dedede; stroke-width: 4; }
.cbx .ic { stroke-width: 3.4; }
.cbx-on { background: #f2a033; border-color: #f2a033; color: #fff; }
.sh-li { height: 51.2px; padding: 0 25px 0 129px; display: flex; justify-content: space-between; align-items: center; font-size: 22.5px; color: #868686; letter-spacing: -.3px; }
.sh-li:nth-child(4) { margin-top: 15.4px; }
.sh-li .ic { color: #444; }
.sh-btn { margin: 36.6px 26px 0 25px; height: 85px; padding-bottom: 3px; border-radius: 20px; background: #efefef; display: flex; align-items: center; justify-content: center; position: relative; color: #888; font-size: 24px; letter-spacing: -.3px; }
.sh-btn b { font-weight: 600; }
.sh-btn-on { background: #f2a033; color: #fff; height: 87px; margin-bottom: -2px; }
.sel-outer { position: absolute; left: -5px; top: -5px; right: -6px; bottom: -6px; border: 4px solid #9352f7; }
.sel-dots { position: absolute; left: 23px; top: 22px; right: 22px; bottom: 22px; border: 2px dotted #9747ff; }
.homebar { width: 202px; height: 7px; border-radius: 4px; background: #000; margin: 58px auto 0; }
.badge { position: absolute; width: 66px; height: 46px; border-radius: 18px; background: #b124f8; color: #fff; font-family: "Open Sans", "Noto Sans", sans-serif; font-size: 24px; line-height: 46px; text-align: center; }
.badge::after { content: ""; position: absolute; left: 30px; top: 36px; width: 28px; height: 26px; background: #b124f8; clip-path: polygon(0 38%, 92% 0, 84% 100%); }
.b-1 { left: 109px; top: 560px; } .b-2 { left: -12px; top: 663px; } .b-21 { left: 472px; top: 726px; } .b-3 { left: -12px; top: 1026px; }

.cv-vbar { position: absolute; left: 1583px; top: 1725px; width: 8px; height: 56px; border-radius: 4px; background: #aaa; }
.cv-hbar { position: absolute; left: 89px; top: 1854px; width: 58px; height: 6px; border-radius: 3px; background: #999; }
.tools { position: absolute; left: 316px; top: 1748px; width: 964px; height: 96px; background: #2c2c2c; border-radius: 24px; display: flex; align-items: center; padding: 0 17px 0 16px; box-shadow: 0 8px 24px rgba(0,0,0,.35); color: #fff; }
.tool { width: 64px; height: 64px; border-radius: 12px; display: flex; align-items: center; justify-content: center; flex: none; }
.tool-on { background: #4a8ae6; }
.tm { margin-left: 16px; }
.tchev + .tm { margin-left: 16px; }
.tchev { width: 34px; display: flex; justify-content: center; flex: none; color: #ddd; }
.tdiv { width: 1px; height: 96px; background: #444; margin: 0 16px 0 17px; flex: none; }
.tgroup { flex: 1; height: 64px; background: #444; border-radius: 14px; display: flex; align-items: center; padding-left: 3px; color: #c8c8c8; }
.tg { width: 56px; height: 64px; display: flex; align-items: center; justify-content: center; border-radius: 12px; flex: none; margin-right: 4px; }
.tg-on { background: #2c2c2c; color: #8cc0f6; }

/* right panel */
.fr { width: 480px; flex: none; background: #2c2c2c; position: relative; color: #eee; font-size: 22px; border-left: 1px solid #3a3a3a; }
.fr-head { height: 163px; border-bottom: 2px solid #3d3d3d; padding-top: 16px; }
.fr-top { height: 64px; padding-left: 23px; display: flex; align-items: center; }
.av { width: 48px; height: 48px; border-radius: 50%; display: flex; align-items: center; justify-content: center; font-size: 22px; color: #f4f4f4; box-shadow: 0 0 0 2px #2c2c2c; flex: none; }
.av + .av { margin-left: -3px; }
.av-b { background: #3f78dc; } .av-p { background: #ec3bb8; }
.fr-c1 { margin-left: 10px; } .fr-play { margin-left: 58px; } .fr-c2 { margin-left: 25px; }
.share { width: 129px; height: 64px; line-height: 64px; text-align: center; background: #4a86e0; border-radius: 12px; color: #fff; margin-left: 21px; font-weight: 500; flex: none; }
.fr-tabs { margin-top: 16px; height: 48px; padding-left: 17px; display: flex; align-items: center; }
.pill-d { width: 93px; height: 48px; line-height: 48px; }
.pill-p { margin-left: 25px; width: 226px; }
.zoomv { width: 71px; color: #eee; }
.fr-page { height: 168px; border-bottom: 2px solid #3d3d3d; padding: 25px 0 0 34px; }
.fr-page b { display: block; height: 26px; line-height: 26px; font-weight: 700; }
.colorrow { margin-top: 36px; display: flex; align-items: center; margin-left: -1px; }
.colorf { width: 368px; height: 48px; background: #383838; border-radius: 10px; display: flex; align-items: center; padding-left: 10px; }
.sw { width: 28px; height: 28px; background: #f5f5f5; border-radius: 3px; }
.hex { margin-left: 12px; width: 209px; }
.cdiv { width: 2px; height: 48px; background: #2c2c2c; margin-right: 16px; }
.pct { width: 62px; } .pc { color: #a8a8a8; }
.colorrow .ic { margin-left: 25px; }
.fr-row { height: 81px; border-bottom: 2px solid #3d3d3d; display: flex; align-items: center; justify-content: space-between; padding: 0 25px 0 34px; color: #a8a8a8; }
.fr-row .ic { color: #e4e4e4; }
.fr-plug { padding: 21px 0 0 34px; }
.fr-plug b { display: block; height: 26px; line-height: 26px; font-weight: 700; }
.plug-row { margin: 48px 25px 0 -5px; height: 42px; display: flex; align-items: center; }
.pxi { width: 40px; height: 40px; border-radius: 9px; background: #8bbcf6; color: #f4f8ff; font-weight: 800; font-size: 22px; text-align: center; line-height: 36px; letter-spacing: -1px; flex: none; }
.pxn { margin-left: 13px; flex: 1; font-weight: 500; }
.plug-d { margin-top: 16px; color: #9a9a9a; font-size: 21.5px; letter-spacing: .1px; }
.help { position: absolute; left: 370px; top: 1756px; width: 64px; height: 64px; border-radius: 50%; background: #1e1e1e; color: #eee; text-align: center; line-height: 64px; font-size: 26px; }

/* obsidian */
.obs { width: 1279px; height: 2110px; background: #242424; border-top: 2px solid #4a4a4a; border-radius: 22px 22px 24px 24px; overflow: hidden; display: flex; flex-direction: column; color: #dadada; }
.ob-bar { height: 86px; flex: none; display: flex; align-items: center; border-bottom: 2px solid #333; color: #9a9a9a; position: relative; }
.ob-tl { margin-left: 69px; }
.ob-cells { margin-left: 40px; display: flex; height: 100%; align-items: center; padding-top: 8px; }
.ob-cells span { width: 68.4px; height: 44px; line-height: 44px; text-align: center; border-right: 2px solid #3d3d3d; color: #777; font-size: 25px; letter-spacing: -1px; white-space: nowrap; overflow: hidden; }
.ob-cells span:last-child { border-right: 0; }
.ob-act { width: 72px; height: 74px; align-self: flex-end; margin-bottom: -2px; background: #1c1c1c; border-radius: 16px 16px 0 0; border: 2px solid #333; border-bottom: 0; display: flex; align-items: center; justify-content: center; color: #ddd; }
.ob-plus { margin-left: 27px; }
.ob-ch { width: 36px; height: 36px; stroke-width: 1.3; margin-left: 46px; }
.ob-tr { margin-left: 36px; }
.ob-main { flex: 1; min-height: 0; display: flex; background: #1c1c1c; }
.rail { width: 96px; flex: none; border-right: 2px solid #333; padding-top: 10px; background: linear-gradient(90deg, #121212, #1e1e1e); color: #8c8c8c; }
.rail span { height: 70px; display: flex; align-items: center; justify-content: center; }
.ob-col { flex: 1; min-width: 0; display: flex; flex-direction: column; }
.pane { position: relative; overflow: hidden; }
.pane-top { height: 769px; flex: none; display: flex; flex-direction: column; }
.pane-bot { flex: 1; min-height: 0; display: flex; flex-direction: column; }
.pnav { height: 78px; flex: none; display: flex; align-items: center; padding: 0 42px 0 43px; color: #6f6f6f; position: relative; }
.pn-a { margin-right: 36px; }
.pn-t { margin-left: auto; margin-right: auto; position: relative; left: -16px; font-size: 26px; color: #b0b0b0; letter-spacing: -.2px; }
.pnav .s-34 { color: #a0a0a0; margin-right: 30px; }
.pn-d { color: #a0a0a0; }
.pbody { flex: 1; min-height: 0; display: flex; }
.doc { flex: 1; min-width: 0; padding-left: 69px; font-size: 33.5px; line-height: 52px; white-space: nowrap; letter-spacing: 0; overflow: hidden; }
.doc-bot { font-size: 33px; }
.doc-bot .has-fold { font-size: 33.5px; }
.h-a { margin: 67px 0 0; font-size: 60px; line-height: 84px; font-weight: 700; color: #e2e2e2; letter-spacing: -1px; }
.h-b { margin: 70px 0 0; font-size: 64px; line-height: 84px; font-weight: 700; color: #e2e2e2; letter-spacing: -2.2px; }
.todo { display: flex; padding-left: 17px; margin-top: 6px; position: relative; }
.mt-32 { margin-top: 32px; } .mt-30 { margin-top: 30px; } .mt-28 { margin-top: 28px; }
.quote + .todo { margin-top: 3px; }
.cb { width: 34px; height: 35px; flex: none; border: 2px solid #666; border-radius: 9px; margin: 9px 16px 0 0; }
.nest { margin: 3px 0 0 33px; height: 58px; border-left: 2px solid #5c5c5c; display: flex; align-items: center; padding-left: 72px; }
.bl { width: 10px; height: 10px; border-radius: 50%; background: #777; margin-right: 13px; flex: none; }
.rule { width: 1013px; height: 3px; background: #333; }
.rule-a { margin-top: 129px; }
.rule-b { margin-top: 79px; }
.quote { margin: 27px 0 0; height: 52px; border-left: 4px solid #7a5cd8; padding-left: 27px; }
.has-fold .fold { position: absolute; left: -22px; top: 16px; color: #a08cf5; stroke-width: 2.4; }
.more { margin: 11px 0 0 87px; height: 42px; line-height: 40px; color: #888; font-size: 28px; }
mark { background: #6f6230; color: #ececec; padding: 0; }
.sp { text-decoration: underline dotted #e0503c 3px; text-underline-offset: 6px; }
.para { margin: 3px 0 0; line-height: 53px; }
.ul { list-style: none; margin: -4px 0 0; padding: 0 0 0 30px; }
.ul li { display: flex; align-items: center; height: 59px; }
.bl2 { width: 9px; height: 12px; border-radius: 50%; background: #777; margin-right: 13px; flex: none; }
.sb { width: 29px; flex: none; border-left: 2px solid #2e2e2e; padding: 8px 0 0 6px; }
.sb-b { padding-top: 9px; }
.th { width: 8px; border-radius: 4px; background: #5e5e5e; }
.th-a { height: 428px; } .th-b { height: 297px; }
.ptabs { height: 91px; flex: none; border-top: 2px solid #333; border-bottom: 2px solid #333; background: #242424; display: flex; align-items: flex-end; font-size: 28px; color: #7e7e7e; letter-spacing: 0; }
.pt { width: 193px; height: 44px; margin-bottom: 15px; line-height: 44px; padding-left: 20px; border-right: 2px solid #3d3d3d; white-space: nowrap; }
.pt-first { width: 232px; padding-left: 58px; }
.pt-on { width: 195px; height: 73px; margin-bottom: -2px; background: #1c1c1c; border: 2px solid #333; border-bottom: 0; border-radius: 16px 16px 0 0; display: flex; align-items: center; justify-content: space-between; padding: 0 23px 0 20px; color: #c8c8c8; }
.pt-last { margin-left: 18px; margin-bottom: 15px; line-height: 44px; width: 172px; }
.pt-div { width: 2px; height: 44px; margin-bottom: 15px; background: #3d3d3d; }
.pt-plus { margin: 0 0 24px 28px; color: #aaa; }
.pt-ch { width: 36px; height: 36px; stroke-width: 1.3; margin: 0 0 19px 49px; color: #aaa; }
.statusbar { position: absolute; right: 0; bottom: 0; width: 541px; height: 59px; background: #242424; border: 2px solid #333; border-right: 0; border-bottom: 0; border-radius: 16px 0 0 0; display: flex; align-items: center; padding-left: 18px; font-size: 26px; color: #a8a8a8; letter-spacing: -.5px; white-space: nowrap; }
.statusbar .ic { margin: 0 28px 0 28px; }
.statusbar span:last-child { margin-left: 36px; }
```
